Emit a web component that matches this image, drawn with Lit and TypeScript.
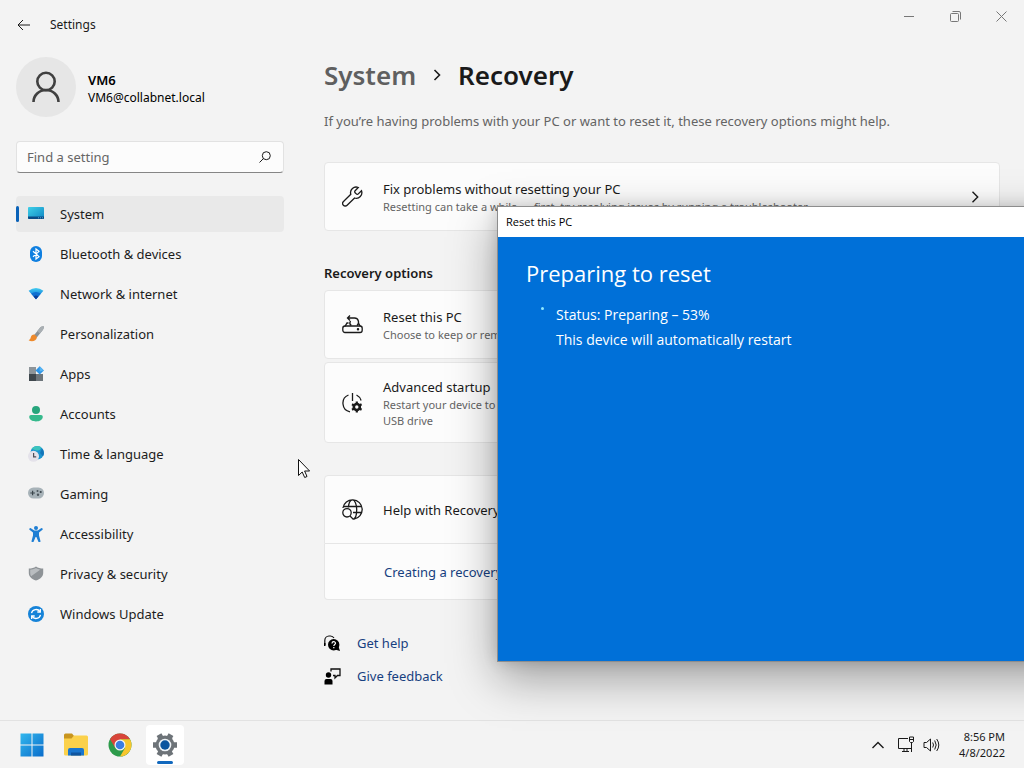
import { LitElement, html, css, svg, TemplateResult } from "lit";
import { customElement, state } from "lit/decorators.js";
import { classMap } from "lit/directives/class-map.js";

const navIcons: Record<string, TemplateResult> = {
  system: svg`<defs><linearGradient id="sy" x1="0" y1="0" x2="1" y2="1"><stop offset="0" stop-color="#3fd0e8"/><stop offset="1" stop-color="#0f86c4"/></linearGradient></defs>
    <rect y="1" width="16" height="12" rx="1" fill="url(#sy)"/><path d="M0 10.500h16V12a1 1 0 0 1-1 1H1a1 1 0 0 1-1-1z" fill="#0a4a86"/><path d="M10 11.800h1M12 11.800h1M14 11.800h1" stroke="#6fc3e8" stroke-width=".8"/>`,
  bluetooth: svg`<rect x="2" width="12" height="16" rx="6" fill="#0f7fe0"/><path d="M5 5.200l6 5.400L8 13V3l3 2.400-6 5.400" fill="none" stroke="#fff" stroke-width="1.200"/>`,
  network: svg`<defs><linearGradient id="ne" x1="0" y1="0" x2="0" y2="1"><stop offset="0" stop-color="#45cdf0"/><stop offset=".5" stop-color="#1a8fe0"/><stop offset="1" stop-color="#0b49a8"/></linearGradient></defs>
    <path d="M.6 4.800Q8 -.6 15.400 4.800L8 13.300z" fill="url(#ne)"/><path d="M3.200 7.800Q8 4.200 12.800 7.800L8 13.300z" fill="#0f6fd0"/><path d="M5.600 10.500Q8 8.700 10.400 10.500L8 13.300z" fill="#0a3f9c"/>`,
  brush: svg`<path d="M15.800.4c-1.600-.4-3.300.6-4.400 2L6.200 9l2.600 2.500 5.600-7c1-1.200 1.800-3 1.400-4.100z" fill="#8a9298"/><path d="M15.800.4c-1.600-.4-3.300.6-4.400 2L9.200 5.200l2.800 2.300 2.400-3c1-1.200 1.800-3 1.400-4.100z" fill="#a9afb3"/><path d="M6.600 8.400c-2.200-.2-3.400 1-3.800 2.800C2.400 13 1.600 13.800.6 14.200c2.600 2.200 7.800 1.400 8.400-3.200z" fill="#ee8a2c"/>`,
  apps: svg`<rect x="1" y="1" width="7" height="7" fill="#8d9499"/><rect x="1" y="8" width="7" height="7" fill="#3f474d"/><rect x="8" y="8" width="7" height="7" fill="#6d757b"/><path d="M11.700.2l4.200 4.200-4.200 4.200-4.200-4.200z" fill="#2f95e6"/><path d="M11.700.2l4.200 4.200-4.200 1z" fill="#56b4f3"/>`,
  accounts: svg`<circle cx="8" cy="4" r="4" fill="#27a57c"/><path d="M3 9h10a1.800 1.800 0 0 1 1.800 1.800c0 3-3.200 4.700-6.800 4.700s-6.800-1.700-6.800-4.700A1.800 1.800 0 0 1 3 9z" fill="#35b98c"/>`,
  time: svg`<circle cx="9.200" cy="6.800" r="6.800" fill="#1c94cf"/><path d="M3.500 3C6-.5 10-.3 12.500.8 14 3 11 5 9.500 4.500 7 5 6 3 3.500 3z" fill="#3cc4bd"/><path d="M14 2.800c2 2 2.500 5.200 1 7.500L12 7z" fill="#1474b8"/><circle cx="5.500" cy="10.300" r="5.500" fill="#e4e2ea"/><path d="M5.600 7v3.800h2.600" fill="none" stroke="#4c4c56" stroke-width="1.200"/>`,
  gaming: svg`<rect y="1.500" width="16" height="11" rx="5.500" fill="#a7b2b8"/><path d="M2.300 7h4.600M4.600 4.700v4.600" stroke="#3b454b" stroke-width="1.200"/><circle cx="9.500" cy="5" r="1" fill="#4b555b"/><circle cx="12.700" cy="6" r="1.100" fill="#3b454b"/><circle cx="10" cy="8.800" r="1.200" fill="#4b555b"/>`,
  accessibility: svg`<circle cx="8" cy="2" r="2" fill="#1f7fd4"/><path d="M2.900 2.300L6.200 4.600h3.600l3.300-2.300a1 1 0 0 1 1.100 1.700L11 6.600v3l1.400 5.200a1.100 1.100 0 0 1-2.100.7L8.400 11h-.8l-1.900 4.500a1.100 1.100 0 0 1-2.100-.7L5 9.600v-3L1.800 4a1 1 0 0 1 1.100-1.700z" fill="#1f7fd4"/>`,
  privacy: svg`<path d="M8 .5c2 1.400 4.500 2 7.200 2V7c0 3.600-2.800 6-7.200 7.500C3.600 13 .8 10.600.8 7V2.500c2.700 0 5.200-.6 7.200-2z" fill="#8e9397"/><path d="M8 2C6 3.200 4 3.600 2.200 3.700v3.600c0 1.100.3 2 .9 2.900l9.400-6.600C11 3.400 9.500 3 8 2z" fill="#b9bdc0"/>`,
  update: svg`<circle cx="8" cy="8" r="8" fill="#1683d8"/><path d="M3.500 7.200A4.700 4.700 0 0 1 12 5.600M12.500 8.800A4.700 4.700 0 0 1 4 10.400" fill="none" stroke="#fff" stroke-width="1.300"/><path d="M12.300 3v3H9.300M3.700 13v-3h3" fill="none" stroke="#fff" stroke-width="1.300"/>`,
};

const navItems = [
  { id: "system", label: "System" },
  { id: "bluetooth", label: "Bluetooth & devices" },
  { id: "network", label: "Network & internet" },
  { id: "brush", label: "Personalization" },
  { id: "apps", label: "Apps" },
  { id: "accounts", label: "Accounts" },
  { id: "time", label: "Time & language" },
  { id: "gaming", label: "Gaming" },
  { id: "accessibility", label: "Accessibility" },
  { id: "privacy", label: "Privacy & security" },
  { id: "update", label: "Windows Update" },
];

const wrench = svg`<path d="M19.500 4.700l-3.200 3.200a1.400 1.400 0 0 1-2 0l-1.200-1.200a1.400 1.400 0 0 1 0-2l3.200-3.200a5.600 5.600 0 0 0-7.500 6.800L1.500 15.500a2.400 2.400 0 0 0 3.600 3.800L12.600 12a5.600 5.600 0 0 0 6.900-7.300z"/>`;
const resetDrive = svg`<rect x=".8" y="12" width="19.400" height="6.500" rx="2.200"/><path d="M5.500 4h7a4 4.200 0 0 1 2.500 7.500M8 1.500L5.500 4 8 6.500M8.500 7c-1 1.500-.5 3.500.8 4.500M6.500 9H5L3 12.300M16.500 9l1.700 3.300"/><circle cx="16" cy="15.300" r=".6" fill="currentColor"/>`;
const powerGear = svg`<path d="M10.500 1v8M6.500 3a8.800 8.800 0 0 0 1.500 16.800M14.500 3a8.800 8.800 0 0 1 4.600 5.500"/><circle cx="14.800" cy="15" r="3" stroke-width="2.600"/><path stroke-width="2.200" d="M14.800 9.500v2M14.800 18.500v2M10 12.200l1.800 1M17.800 16.800l1.800 1M10 17.800l1.800-1M17.800 13.200l1.800-1"/>`;
const globeSearch = svg`<path d="M.9 9A9.700 9.700 0 1 1 12 20.100M1.300 7.500h18.400M11 13.500h8.700M6.300 8.500C6.800 4 8.300.9 10.500.9s4.200 4.200 4.200 9.600-1.600 9.100-3.400 9.600"/><circle cx="5" cy="13.800" r="4.200"/><path d="M8 17l3.500 3.500"/>`;

@customElement("nav-list")
class NavList extends LitElement {
  @state() private current = "system";

  static styles = css`
    :host { display: block; }
    .list { display: flex; flex-direction: column; gap: 4px; }
    .item {
      display: flex; align-items: center; gap: 16px; height: 36px; padding: 0 12px 0 0;
      border-radius: 4px; color: #1c1c1c; text-decoration: none; font-size: 13px; line-height: 20px;
    }
    .item::before { content: ""; width: 3px; height: 16px; border-radius: 2px; margin-right: -7px; }
    .item.active { background: #e9e9e9; }
    .item.active::before { background: #0a62b8; }
    .icon { width: 16px; height: 16px; flex: none; }
  `;

  render() {
    return html`<nav class="list" aria-label="Settings">
      ${navItems.map((n) => html`<a href="#${n.id}"
        class=${classMap({ item: true, active: n.id === this.current })}
        @click=${() => (this.current = n.id)}>
        <svg class="icon" viewBox="0 0 16 16" aria-hidden="true">${navIcons[n.id]}</svg>
        <span>${n.label}</span></a>`)}
    </nav>`;
  }
}

@customElement("reset-dialog")
class ResetDialog extends LitElement {
  static styles = css`
    :host {
      display: flex; flex-direction: column; box-sizing: border-box; color: #fff;
      border: 1px solid #8d8d8d; background: #0070d8;
      box-shadow: 0 16px 44px rgba(0, 0, 0, 0.36), 0 0 14px rgba(0, 0, 0, 0.14);
      font-family: "Open Sans", "Noto Sans", sans-serif;
    }
    .bar { height: 30px; padding: 0 8px; background: #fff; color: #000; font-size: 11px; line-height: 30px; }
    .content { padding: 20px 28px; }
    .title { margin: 0 0 13px; font-size: 22px; line-height: 32px; font-weight: 400; }
    .status { display: flex; gap: 12px; font-size: 14px; line-height: 25px; padding-left: 15px; }
    .dot { flex: none; width: 3px; height: 3px; border-radius: 50%; margin-top: 5px; background: #8fe8ff; }
    p { margin: 0; }
  `;

  render() {
    return html`<div class="bar">Reset this PC</div>
      <div class="content">
        <h2 class="title">Preparing to reset</h2>
        <div class="status" role="status">
          <span class="dot"></span>
          <div><p>Status: Preparing – 53%</p><p>This device will automatically restart</p></div>
        </div>
      </div>`;
  }
}

@customElement("task-bar")
class TaskBar extends LitElement {
  static styles = css`
    :host {
      display: flex; align-items: center; justify-content: space-between; box-sizing: border-box;
      height: 48px; padding: 0 19px 0 10px; border-top: 1px solid #e2e2e2; background: #f3f3f3;
    }
    button { border: 0; padding: 0; background: none; color: #1a1a1a; font: inherit; }
    .apps { display: flex; }
    .app { position: relative; display: grid; place-items: center; width: 44px; height: 40px; border-radius: 4px; }
    .app svg { width: 26px; height: 26px; }
    .open { width: 38px; margin-left: 4px; background: #fff; }
    .open::after { content: ""; position: absolute; bottom: 1px; left: 11px; width: 16px; height: 3px; border-radius: 2px; background: #1168bd; }
    .tray { display: flex; align-items: center; gap: 12px; }
    .glyph { display: block; fill: none; stroke: #1a1a1a; }
    .net { display: flex; gap: 8px; align-items: center; }
    .clock { font-size: 11px; line-height: 16px; text-align: right; margin-left: 4px; width: 49px; }
  `;

  render() {
    return html`<div class="apps">
        <button class="app" aria-label="Start"><svg viewBox="0 0 26 26">
          <defs><linearGradient id="w" gradientUnits="userSpaceOnUse" x1="0" y1="0" x2="26" y2="26"><stop offset="0" stop-color="#35bdf0"/><stop offset="1" stop-color="#0767c8"/></linearGradient></defs>
          <path fill="url(#w)" d="M1.500 1.500h11v11h-11zM13.500 1.500h11v11h-11zM1.500 13.500h11v11h-11zM13.500 13.500h11v11h-11z"/></svg></button>
        <button class="app" aria-label="File Explorer"><svg viewBox="0 0 26 26">
          <path fill="#c8951f" d="M1 3a1.500 1.500 0 0 1 1.500-1.500H9l2.500 3V9H1z"/><path fill="#fbd14b" d="M1 6.500h7.500L11 3.500h12.500A1.500 1.500 0 0 1 25 5v17a1.500 1.500 0 0 1-1.500 1.500h-21A1.500 1.500 0 0 1 1 22z"/>
          <path fill="#1976cf" d="M7 16h12a2 2 0 0 1 2 2v5.500H5V18a2 2 0 0 1 2-2z"/><path fill="#0f559f" d="M8 20.500h10v3H8z"/></svg></button>
        <button class="app" aria-label="Google Chrome"><svg viewBox="0 0 26 26">
          <circle cx="13" cy="13" r="11.500" fill="#2d9b4b"/><path fill="#d8453a" d="M3 7.300A11.500 11.500 0 0 1 23 7.300H13v5.700l-4.900 2.800z"/><path fill="#f8c62c" d="M13 7.300h10A11.500 11.500 0 0 1 13 24.500l5-8.600z"/>
          <circle cx="13" cy="13" r="5.500" fill="#f5f5f5"/><circle cx="13" cy="13" r="4.300" fill="#3b7de0"/></svg></button>
        <button class="app open" aria-label="Settings"><svg viewBox="0 0 26 26">
          <g stroke="#6d7378" stroke-width="5.500" stroke-linejoin="round"><path d="M1 13h24M7 2.600l12 20.800M19 2.600L7 23.400"/></g><circle cx="13" cy="13" r="9.500" fill="#6d7378"/><circle cx="13" cy="13" r="6.300" fill="#eef3f7"/><circle cx="13" cy="13" r="4.700" fill="#0b559f"/></svg></button>
      </div>
      <div class="tray">
        <button aria-label="Show hidden icons"><svg class="glyph" width="14" height="10" viewBox="0 0 14 10"><path d="M1.500 8L7 2.500 12.500 8" stroke-width="1.400"/></svg></button>
        <button class="net" aria-label="Network and volume">
          <svg class="glyph" width="18" height="17" viewBox="0 0 18 17"><path d="M11 2.500H1.500v10H14M5 15.500h7M7 12.500v3M10 12.500v3M12.500 1h4v4.500l-1 1h-2l-1-1zM14.500 6.500V16M13 3.500h3"/></svg>
          <svg class="glyph" width="17" height="16" viewBox="0 0 17 16"><path d="M1 5.500h2.500L7.500 2v12l-4-3.500H1zM9.700 5.500q1.600 2.500 0 5M11.700 3.500q3 4.500 0 9M13.700 2q4.200 6 0 12"/></svg>
        </button>
        <div class="clock"><div>8:56 PM</div><div>4/8/2022</div></div>
      </div>`;
  }
}

@customElement("app-root")
class AppRoot extends LitElement {
  static styles = css`
    :host {
      position: relative; display: flex; flex-direction: column; height: 100vh; overflow: hidden;
      background: #f3f3f3; color: #1a1a1a; font-family: "Noto Sans", "Open Sans", sans-serif;
      font-size: 13px; line-height: 20px;
    }
    button { border: 0; padding: 0; background: none; color: inherit; font: inherit; text-align: left; }
    a { color: #173f80; text-decoration: none; }
    .titlebar { display: flex; justify-content: space-between; align-items: flex-start; height: 49px; flex: none; }
    .caption { display: flex; align-items: center; gap: 19px; height: 49px; padding-left: 17px; font-size: 12px; line-height: 17px; }
    .line { display: block; fill: none; stroke: currentColor; }
    .controls { display: flex; color: #777; }
    .controls button { display: grid; place-items: center; width: 46px; height: 32px; }
    .body { display: flex; flex: 1; min-height: 0; }
    .side { flex: none; width: 268px; padding: 8px 16px 0; }
    .user { display: flex; align-items: center; gap: 12px; margin-bottom: 24px; color: #000; }
    .avatar { display: grid; place-items: center; width: 60px; height: 60px; border-radius: 50%; background: #e6e6e6; color: #404040; }
    .name { font-weight: 600; font-size: 13px; line-height: 18px; padding-top: 3px; }
    .mail { font-size: 12px; line-height: 18px; }
    .search {
      display: flex; align-items: center; box-sizing: border-box; height: 32px; padding: 0 12px 0 10px; margin-bottom: 23px;
      border: 1px solid #e2e2e2; border-bottom-color: #858585; border-radius: 4px; background: #fcfcfc;
    }
    .search input { flex: 1; min-width: 0; border: 0; padding: 0; outline: 0; background: none; font: inherit; color: inherit; }
    .search input::placeholder { color: #666; opacity: 1; }
    .main { flex: 1; min-width: 0; padding: 8px 24px 0; }
    .crumbs { display: flex; align-items: center; gap: 17px; margin: 0; font-size: 26px; line-height: 36px; font-weight: 600; }
    .crumbs a { color: #5f5f5f; }
    .intro { margin: 18px 0 31px; color: #646464; }
    .card { display: flex; align-items: center; gap: 20px; box-sizing: border-box; width: 100%; min-height: 69px; padding: 0 18px 0 17px;
      border: 1px solid #e6e6e6; border-radius: 4px; background: #fcfcfc; }
    .card .grow { flex: 1; }
    .icon { flex: none; width: 21px; height: 21px; stroke-width: 1.3; }
    .desc { display: block; color: #646464; font-size: 11px; line-height: 16px; }
    .label { display: block; }
    .section { margin: 32px 0 7px; font-size: 13px; line-height: 20px; font-weight: 600; }
    .stack { display: flex; flex-direction: column; gap: 3px; margin-bottom: 32px; }
    .tall { min-height: 81px; }
    .top { border-radius: 4px 4px 0 0; }
    .sub { min-height: 56px; padding-left: 59px; border-top: 0; border-radius: 0 0 4px 4px; }
    .links { display: flex; flex-direction: column; gap: 13px; margin-top: 33px; }
    .links a { display: flex; align-items: center; gap: 16px; }
    .links svg { color: #111; }
    .dialog { position: absolute; left: 497px; top: 206px; width: 640px; height: 456px; }
    .pointer { position: absolute; left: 297px; top: 458px; }
  `;

  render() {
    return html`
      <header class="titlebar">
        <div class="caption">
          <button aria-label="Back"><svg class="line" width="14" height="14" viewBox="0 0 14 14"><path d="M13 7H1M6 2L1 7l5 5"/></svg></button>
          <span>Settings</span>
        </div>
        <div class="controls">
          <button aria-label="Minimize"><svg class="line" width="11" height="11"><path d="M0 5.500h10"/></svg></button>
          <button aria-label="Restore"><svg class="line" width="11" height="11"><rect x=".5" y="2.500" width="8" height="8" rx="1"/><path d="M2.500.5H9a1.500 1.500 0 0 1 1.500 1.500v6.500"/></svg></button>
          <button aria-label="Close"><svg class="line" width="11" height="11"><path d="M.5.5l10 10M10.500.5l-10 10"/></svg></button>
        </div>
      </header>
      <div class="body">
        <aside class="side">
          <div class="user">
            <div class="avatar"><svg class="line" width="28" height="32" viewBox="0 0 28 32" stroke-width="2.600"><circle cx="14" cy="10.500" r="8.700"/><path d="M1.500 31a12.500 12 0 0 1 25 0"/></svg></div>
            <div><div class="name">VM6</div><div class="mail">VM6@collabnet.local</div></div>
          </div>
          <label class="search">
            <input type="search" placeholder="Find a setting" aria-label="Find a setting">
            <svg class="line" width="12" height="12" viewBox="0 0 12 12"><circle cx="7.300" cy="4.700" r="4"/><path d="M4.500 7.500L.5 11.500"/></svg>
          </label>
          <nav-list></nav-list>
        </aside>
        <main class="main">
          <h1 class="crumbs"><a href="#system">System</a>
            <svg class="line" width="8" height="12" viewBox="0 0 8 12" stroke-width="1.600"><path d="M1.500 1l5 5-5 5"/></svg>
            <span>Recovery</span></h1>
          <p class="intro">If you’re having problems with your PC or want to reset it, these recovery options might help.</p>
          <button class="card">
            <svg class="line icon" viewBox="0 0 21 21">${wrench}</svg>
            <span class="grow"><span class="label">Fix problems without resetting your PC</span>
              <span class="desc">Resetting can take a while — first, try resolving issues by running a troubleshooter</span></span>
            <svg class="line" width="12" height="12" viewBox="0 0 12 12" stroke-width="1.400"><path d="M3.500 .8L8.700 6 3.500 11.200"/></svg>
          </button>
          <h2 class="section">Recovery options</h2>
          <div class="stack">
            <div class="card"><svg class="line icon" viewBox="0 0 21 21">${resetDrive}</svg>
              <div><span class="label">Reset this PC</span><span class="desc">Choose to keep or remove your files</span></div></div>
            <div class="card tall"><svg class="line icon" viewBox="0 0 21 21">${powerGear}</svg>
              <div><span class="label">Advanced startup</span><span class="desc">Restart your device to change startup settings<br>USB drive</span></div></div>
          </div>
          <section>
            <div class="card top"><svg class="line icon" viewBox="0 0 21 21">${globeSearch}</svg><span>Help with Recovery</span></div>
            <div class="card sub"><a href="#drive">Creating a recovery drive</a></div>
          </section>
          <div class="links">
            <a href="#help"><svg width="17" height="17" viewBox="0 0 17 17"><path d="M.8 10V5.500A4.500 4.500 0 0 1 5 1h1.500a4.500 4.500 0 0 1 3.500 2" fill="none" stroke="currentColor" stroke-width="1.200"/><path d="M0 8h1.500v3H0z"/><circle cx="9.700" cy="9.700" r="5.700"/><path d="M11 14.500l5 1.500-1.700-5z"/><path d="M8 8.500c0-2.400 3.500-2.300 3.500-.2 0 1.200-1.700 1.200-1.700 2.600M9.800 12v1.200" fill="none" stroke="#fff" stroke-width="1.200"/></svg>Get help</a>
            <a href="#feedback"><svg width="17" height="17" viewBox="0 0 17 17"><circle cx="4.500" cy="7" r="2.700"/><path d="M.5 16.500V13a2 2 0 0 1 2-2h4a2 2 0 0 1 2 2v3.500z"/><path d="M7 3.500V1h9v6.500h-2.500l-2.500 2.500V7.500H9" fill="none" stroke="currentColor" stroke-width="1.300"/></svg>Give feedback</a>
          </div>
        </main>
      </div>
      <task-bar></task-bar>
      <reset-dialog class="dialog" role="dialog" aria-label="Reset this PC"></reset-dialog>
      <svg class="pointer" width="14" height="22" viewBox="0 0 14 22" aria-hidden="true"><path d="M1.500 1.500v16l3.700-3.500 2.500 5.500 2.300-1-2.400-5.500h5z" fill="#fff" stroke="#111"/></svg>
    `;
  }
}
